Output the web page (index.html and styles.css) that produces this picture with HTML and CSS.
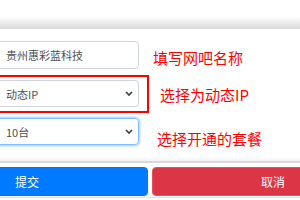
FILE: index.html
```html
<!DOCTYPE html>
<html lang="zh-CN">
<head>
<meta charset="utf-8">
<link rel="stylesheet" href="styles.css">
</head>
<body>
<div class="page">
  <div class="header"></div>
  <div class="form">
    <div class="row row-name">
      <div class="field">贵州惠彩蓝科技</div>
      <span class="note note-name">填写网吧名称</span>
    </div>
    <div class="row row-type">
      <div class="field select">动态IP
        <svg class="chev" viewBox="0 0 8 5" width="8" height="5"><path d="M1 1 L4 4 L7 1" fill="none" stroke="#343a40" stroke-width="1.6"/></svg>
      </div>
      <span class="note note-type">选择为动态IP</span>
    </div>
    <div class="row row-plan">
      <div class="field select focus">10台
        <svg class="chev" viewBox="0 0 8 5" width="8" height="5"><path d="M1 1 L4 4 L7 1" fill="none" stroke="#343a40" stroke-width="1.6"/></svg>
      </div>
      <span class="note note-plan">选择开通的套餐</span>
    </div>
    <div class="mark"></div>
  </div>
  <div class="footer">
    <div class="btn btn-submit">提交</div>
    <div class="btn btn-cancel">取消</div>
  </div>
</div>
</body>
</html>
```
FILE: styles.css
```css
html, body {
  margin: 0;
  padding: 0;
  background: #fff;
}
.page {
  width: 300px;
  height: 200px;
  overflow: hidden;
  font-family: "Noto Sans CJK SC", "Noto Sans", sans-serif;
  position: relative;
}
.header {
  height: 29px;
  background: linear-gradient(to bottom, #fff 0, #fff 16px, #ebebeb 23px, #dadada 29px);
}
.form {
  position: relative;
  padding-top: 12px;
}
.row {
  display: flex;
  align-items: center;
}
.field {
  box-sizing: border-box;
  margin-left: -4px;
  width: 143px;
  height: 28px;
  border: 1px solid #ced4da;
  border-radius: 4px;
  padding-left: 9px;
  display: flex;
  align-items: center;
  font-size: 11px;
  color: #495057;
}
.select {
  height: 27px;
  justify-content: space-between;
  padding-right: 5px;
}
.focus {
  border-color: #80bdff;
  box-shadow: 0 0 0 1.5px rgba(0, 123, 255, 0.25);
}
.row-type {
  margin-top: 11px;
}
.row-plan {
  margin-top: 11px;
}
.note {
  color: #ff0000;
  font-size: 15px;
  line-height: 18px;
}
.note-name {
  margin-left: 14px;
  margin-top: 3px;
  margin-bottom: -3px;
}
.note-type {
  margin-left: 21px;
  margin-top: 1px;
  margin-bottom: -1px;
}
.note-plan {
  margin-left: 18px;
  margin-top: 7px;
  margin-bottom: -7px;
}
.mark {
  position: absolute;
  left: -2px;
  top: 46px;
  width: 147px;
  height: 34px;
  border: 2px solid #ff0000;
}
.footer {
  margin-top: 16px;
  border-top: 2px solid #d9d9d9;
  box-shadow: 0 -2px 3px rgba(0,0,0,0.06);
  border-bottom: 1px solid #e2e2e2;
  padding: 4px 0 0 0;
  display: flex;
  gap: 4px;
  margin-left: -4px;
  margin-right: -4px;
}
.btn {
  box-sizing: border-box;
  height: 29px;
  border-radius: 4px;
  color: #fff;
  font-size: 12px;
  display: flex;
  align-items: center;
  flex: 1;
  margin-bottom: 1px;
}
.btn-submit {
  background: #007bff;
  border: 1px solid #0a74e6;
  padding-left: 18px;
}
.btn-cancel {
  background: #dc3545;
  border: 1px solid #e05461;
  justify-content: flex-end;
  padding-right: 18px;
}
```
